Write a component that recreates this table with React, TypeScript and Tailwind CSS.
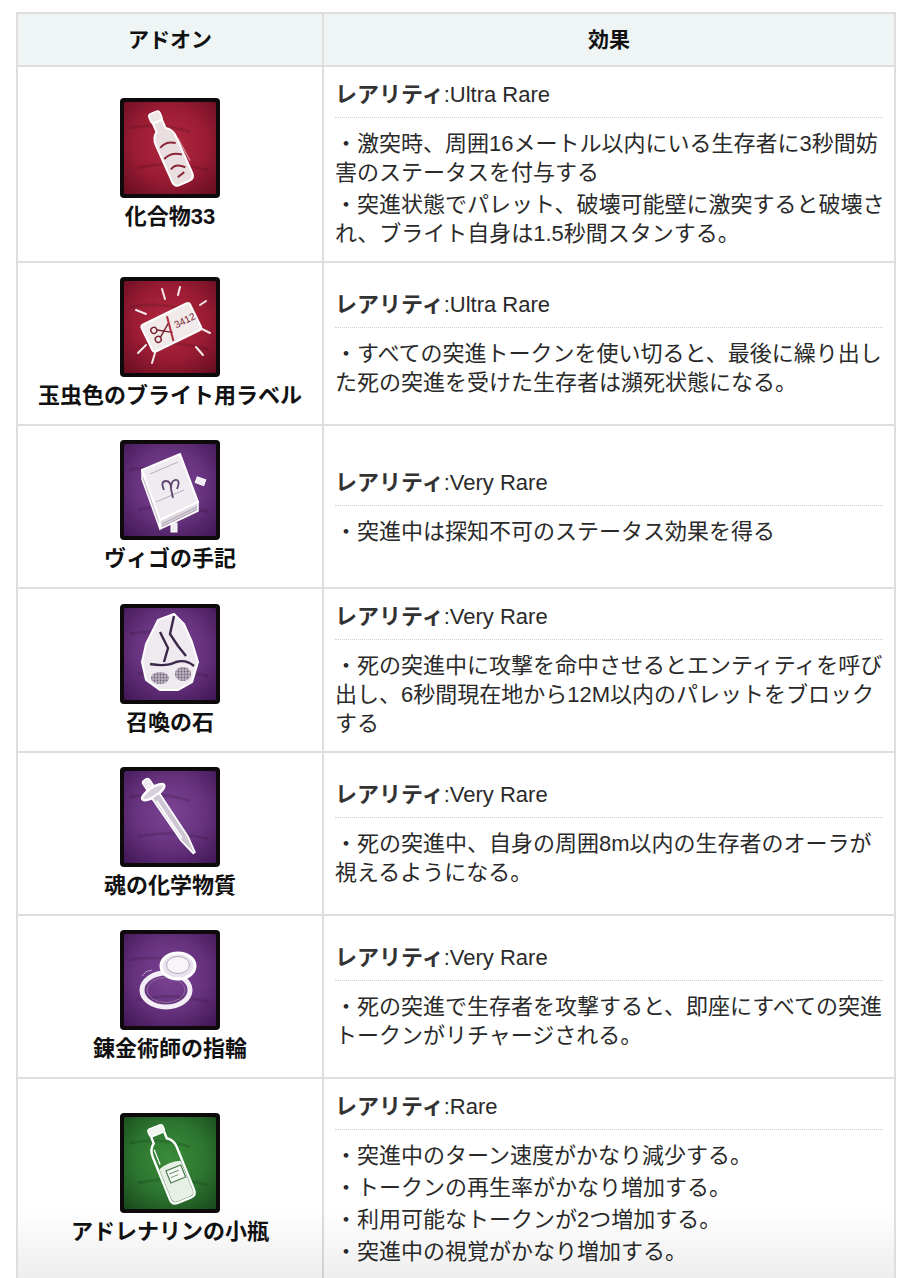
import React from "react";

type IconKind = "compound" | "label" | "book" | "rock" | "dropper" | "ring" | "vial";

const FONT = '"Liberation Sans", "Noto Sans CJK JP", sans-serif';

function Frame({ id, inner, mid, edge, children }: { id: string; inner: string; mid: string; edge: string; children: React.ReactNode }) {
  return (
    <svg width="100" height="100" viewBox="0 0 100 100" className="block">
      <defs>
        <radialGradient id={id} cx="50%" cy="45%" r="70%">
          <stop offset="0%" stopColor={inner} />
          <stop offset="55%" stopColor={mid} />
          <stop offset="100%" stopColor={edge} />
        </radialGradient>
      </defs>
      <rect x="0" y="0" width="100" height="100" rx="4" fill="#0e0a0c" />
      <rect x="4" y="4" width="92" height="92" rx="1.5" fill={`url(#${id})`} />
      <path d="M10 30 Q40 24 70 34 M18 70 Q50 62 88 72" stroke="#000" strokeOpacity="0.12" strokeWidth="3" fill="none" />
      {children}
    </svg>
  );
}

const RED = { inner: "#b3283f", mid: "#9b1c34", edge: "#6c0f22" };
const PURPLE = { inner: "#7c4495", mid: "#66327d", edge: "#44195a" };
const GREEN = { inner: "#3b8c3a", mid: "#2d7630", edge: "#1a4d1e" };

function Icon({ kind }: { kind: IconKind }) {
  switch (kind) {
    case "compound":
      return (
        <Frame id="g-compound" {...RED}>
          <g transform="rotate(-24 50 52)">
            <rect x="44" y="11" width="12" height="10" rx="3" fill="#efe6e6" stroke="#fff" strokeWidth="1.5" />
            <path d="M45 21 L45 30 Q39 34 39 42 L39 82 Q39 88 45 88 L55 88 Q61 88 61 82 L61 42 Q61 34 55 30 L55 21 Z" fill="#eadfe0" stroke="#fff" strokeWidth="2" />
            <path d="M42 46 Q50 42 58 48 M41 58 Q50 54 59 61 M43 70 Q50 66 57 74 M46 80 L54 78" stroke="#8c2536" strokeWidth="2" fill="none" />
            <path d="M62 44 L64 70" stroke="#fff" strokeOpacity="0.6" strokeWidth="1" />
          </g>
        </Frame>
      );
    case "label":
      return (
        <Frame id="g-label" {...RED}>
          <g stroke="#f4e8ea" strokeWidth="2" strokeLinecap="round">
            <line x1="42" y1="12" x2="45" y2="22" />
            <line x1="60" y1="10" x2="58" y2="18" />
            <line x1="16" y1="33" x2="26" y2="37" />
            <line x1="18" y1="76" x2="26" y2="68" />
            <line x1="32" y1="86" x2="35" y2="76" />
            <line x1="82" y1="52" x2="90" y2="56" />
            <line x1="76" y1="70" x2="83" y2="78" />
            <line x1="80" y1="28" x2="86" y2="24" />
          </g>
          <g transform="rotate(-26 50 50)">
            <rect x="24" y="36" width="54" height="30" rx="3" fill="#f1eaea" stroke="#fff" strokeWidth="2" />
            <circle cx="34" cy="46" r="3" fill="none" stroke="#7a2030" strokeWidth="1.4" />
            <circle cx="34" cy="56" r="3" fill="none" stroke="#7a2030" strokeWidth="1.4" />
            <path d="M37 47 L50 56 M37 55 L50 46" stroke="#7a2030" strokeWidth="1.4" />
            <line x1="52" y1="39" x2="47" y2="64" stroke="#b02a3e" strokeWidth="2" />
            <text x="55" y="54" fontSize="10" fill="#7a2030" fontFamily="Liberation Sans, sans-serif">3412</text>
          </g>
        </Frame>
      );
    case "book":
      return (
        <Frame id="g-book" {...PURPLE}>
          <polygon points="22,30 40,80 40,89 22,39" fill="#c9c1cd" stroke="#fff" strokeWidth="1.5" />
          <polygon points="40,80 78,62 78,71 40,89" fill="#ddd7e0" stroke="#fff" strokeWidth="1.5" />
          <path d="M42 84 L77 67 M42 86.5 L77 69.5" stroke="#9d91a6" strokeWidth="0.8" />
          <polygon points="22,30 60,14 78,62 40,80" fill="#efebf1" stroke="#fff" strokeWidth="2" />
          <path d="M30 34 L58 22 M36 62 L64 50" stroke="#b9aec0" strokeWidth="1" />
          <path d="M44 50 Q40 41 46 41 Q51 41 51 49 Q51 41 55 40 Q61 39 57 49 M51 49 L53 58" stroke="#5f4470" strokeWidth="1.8" fill="none" />
          <rect x="76" y="38" width="9" height="6" fill="#f1ecf3" stroke="#fff" transform="rotate(20 80 41)" />
          <rect x="51" y="83" width="6" height="9" fill="#f1ecf3" stroke="#fff" />
        </Frame>
      );
    case "rock":
      return (
        <Frame id="g-rock" {...PURPLE}>
          <defs>
            <pattern id="dots" width="3" height="3" patternUnits="userSpaceOnUse">
              <circle cx="1.5" cy="1.5" r="0.9" fill="#6b5d73" />
            </pattern>
          </defs>
          <polygon points="38,16 54,10 64,20 72,38 78,58 72,78 58,86 40,86 26,76 22,58 26,40" fill="#efeaf0" stroke="#fff" strokeWidth="2" />
          <path d="M54 12 L50 30 L58 42 M40 28 L48 44 L44 58 M58 42 L66 52 M30 60 Q46 63 56 58 Q66 55 74 62" stroke="#3b2748" strokeWidth="2.4" fill="none" />
          <ellipse cx="40" cy="74" rx="9" ry="6" fill="#b9b0be" />
          <ellipse cx="40" cy="74" rx="9" ry="6" fill="url(#dots)" />
          <ellipse cx="63" cy="70" rx="8" ry="7" fill="#b9b0be" />
          <ellipse cx="63" cy="70" rx="8" ry="7" fill="url(#dots)" />
        </Frame>
      );
    case "dropper":
      return (
        <Frame id="g-dropper" {...PURPLE}>
          <g transform="rotate(-34 50 50)">
            <rect x="46" y="5" width="8" height="12" rx="3" fill="#f1ecf3" stroke="#fff" strokeWidth="1.5" />
            <ellipse cx="50" cy="20" rx="13" ry="4.5" fill="#d9d0de" stroke="#fff" strokeWidth="2.5" />
            <path d="M45.5 24 L54.5 24 L54 76 L51 93 L49 93 L46 76 Z" fill="#cfc6d4" stroke="#fff" strokeWidth="1.8" />
            <line x1="48" y1="29" x2="48" y2="74" stroke="#fff" strokeWidth="1.5" />
          </g>
        </Frame>
      );
    case "ring":
      return (
        <Frame id="g-ring" {...PURPLE}>
          <ellipse cx="46" cy="60" rx="24" ry="17" fill="none" stroke="#f3eef5" strokeWidth="5" />
          <ellipse cx="46" cy="60" rx="19" ry="12.5" fill="none" stroke="#8c6e9a" strokeWidth="1" />
          <ellipse cx="58" cy="36" rx="17" ry="13" fill="#e8e2ec" stroke="#fff" strokeWidth="3" />
          <ellipse cx="58" cy="35" rx="11.5" ry="8.5" fill="#f8f5f9" stroke="#b6a9bf" strokeWidth="1" />
          <path d="M22 46 Q26 40 32 40" stroke="#fff" strokeOpacity="0.5" strokeWidth="1" fill="none" />
        </Frame>
      );
    case "vial":
      return (
        <Frame id="g-vial" {...GREEN}>
          <g transform="rotate(-22 50 52)">
            <rect x="42" y="11" width="16" height="8" rx="2.5" fill="#eef4ee" stroke="#fff" strokeWidth="1.5" />
            <path d="M43 19 L43 26 Q37 30 37 38 L37 84 Q37 90 43 90 L57 90 Q63 90 63 84 L63 38 Q63 30 57 26 L57 19" fill="none" stroke="#fff" strokeWidth="2.4" />
            <path d="M38.5 52 Q50 48 61.5 52 L61.5 84 Q61.5 88.5 57 88.5 L43 88.5 Q38.5 88.5 38.5 84 Z" fill="#e8f0e6" />
            <rect x="44" y="56" width="16" height="13" fill="#f6faf5" stroke="#4f7a4f" strokeWidth="1.2" />
            <path d="M46 60 L56 60 M46 64 L54 64" stroke="#6e8f6e" strokeWidth="1" />
            <line x1="41" y1="32" x2="41" y2="48" stroke="#fff" strokeWidth="1.2" />
          </g>
        </Frame>
      );
  }
}

type Row = { name: string; icon: IconKind; rarity: string; paras: string[][] };

const rows: Row[] = [
  {
    name: "化合物33",
    icon: "compound",
    rarity: "Ultra Rare",
    paras: [
      ["・激突時、周囲16メートル以内にいる生存者に3秒間妨", "害のステータスを付与する"],
      ["・突進状態でパレット、破壊可能壁に激突すると破壊さ", "れ、ブライト自身は1.5秒間スタンする。"],
    ],
  },
  {
    name: "玉虫色のブライト用ラベル",
    icon: "label",
    rarity: "Ultra Rare",
    paras: [["・すべての突進トークンを使い切ると、最後に繰り出し", "た死の突進を受けた生存者は瀕死状態になる。"]],
  },
  {
    name: "ヴィゴの手記",
    icon: "book",
    rarity: "Very Rare",
    paras: [["・突進中は探知不可のステータス効果を得る"]],
  },
  {
    name: "召喚の石",
    icon: "rock",
    rarity: "Very Rare",
    paras: [["・死の突進中に攻撃を命中させるとエンティティを呼び", "出し、6秒間現在地から12M以内のパレットをブロック", "する"]],
  },
  {
    name: "魂の化学物質",
    icon: "dropper",
    rarity: "Very Rare",
    paras: [["・死の突進中、自身の周囲8m以内の生存者のオーラが", "視えるようになる。"]],
  },
  {
    name: "錬金術師の指輪",
    icon: "ring",
    rarity: "Very Rare",
    paras: [["・死の突進で生存者を攻撃すると、即座にすべての突進", "トークンがリチャージされる。"]],
  },
  {
    name: "アドレナリンの小瓶",
    icon: "vial",
    rarity: "Rare",
    paras: [
      ["・突進中のターン速度がかなり減少する。"],
      ["・トークンの再生率がかなり増加する。"],
      ["・利用可能なトークンが2つ増加する。"],
      ["・突進中の視覚がかなり増加する。"],
    ],
  },
];

export default function App() {
  return (
    <div className="min-h-[1278px] bg-white pt-[12px] pl-[16px]" style={{ fontFamily: FONT }}>
      <div className="relative w-[880px] border-2 border-[#dedede]">
        <div className="grid grid-cols-[304px_1fr] bg-[#eff5f5] text-[21px] font-bold text-[#111]">
          <div className="flex h-[51px] items-center justify-center">アドオン</div>
          <div className="flex h-[51px] items-center justify-center border-l-2 border-[#dedede]">効果</div>
        </div>
        {rows.map((r) => (
          <div key={r.name} className="grid grid-cols-[304px_minmax(0,1fr)] border-t-2 border-[#dedede]">
            <div className="flex flex-col items-center justify-center py-[14px]">
              <Icon kind={r.icon} />
              <div className="mt-[4px] text-[22px] font-bold leading-[29px] text-[#111]">{r.name}</div>
            </div>
            <div className="flex min-w-0 flex-col justify-center border-l-2 border-[#dedede] px-[11px] py-[13px] text-[22px] leading-[29px] text-[#2a2a2a]">
              <div className="border-b border-dotted border-[#cfcfcf] pb-[8px] whitespace-nowrap">
                <span className="font-bold text-[#333]">レアリティ</span>:{r.rarity}
              </div>
              <div className="mt-[11px] flex flex-col gap-[3px]">
                {r.paras.map((p, i) => (
                  <div key={i}>
                    {p.map((l, j) => (
                      <div key={j} className="whitespace-nowrap">
                        {l}
                      </div>
                    ))}
                  </div>
                ))}
              </div>
            </div>
          </div>
        ))}
        <div className="pointer-events-none absolute inset-x-0 bottom-0 h-[70px] bg-linear-to-b from-transparent to-black/[0.07]" />
      </div>
    </div>
  );
}
